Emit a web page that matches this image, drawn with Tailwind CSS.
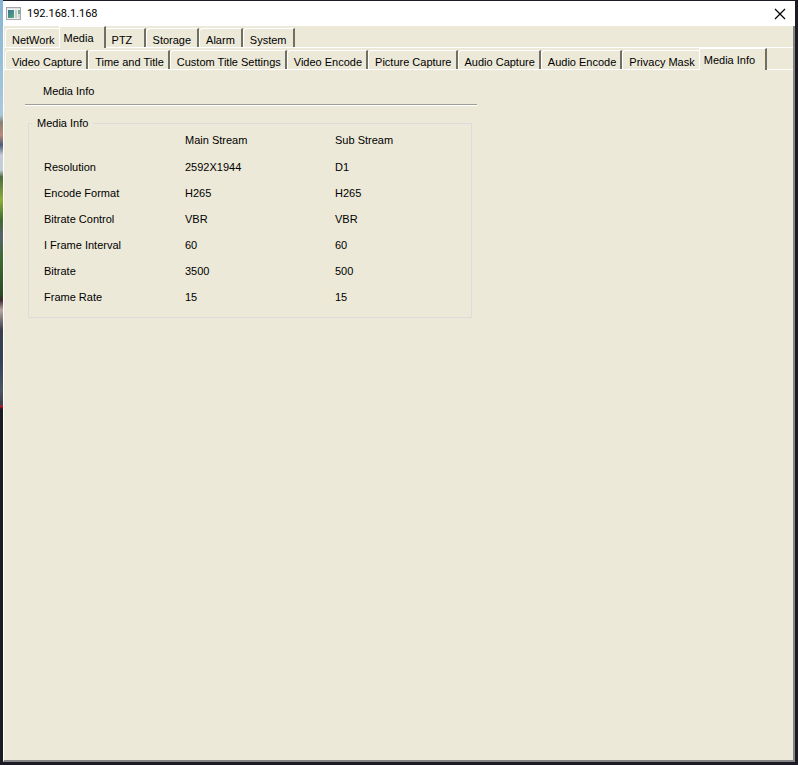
<!DOCTYPE html>
<html lang="en">
<head>
  <meta charset="UTF-8" />
  <meta name="viewport" content="width=device-width, initial-scale=1.0" />
  <title>192.168.1.168</title>
  <script src="https://cdn.jsdelivr.net/npm/@tailwindcss/browser@4"></script>
</head>
<body class="relative min-h-screen flex flex-col bg-[#1c1a22] pt-px pr-[3px] pb-[3px] pl-[3px] font-['Liberation_Sans',Arial,sans-serif] text-[11px] leading-4 text-black">
  <!-- Desktop showing beside the window -->
  <div class="absolute left-0 top-0 w-[3px] h-[409px] bg-[linear-gradient(180deg,#86b4d4_0px,#a9c9dc_115px,#8a8175_122px,#b98a78_135px,#4f5b78_145px,#c5ccd4_155px,#c3cfd4_170px,#4c6b3c_177px,#8fae3d_200px,#3f6a2c_220px,#56636c_236px,#3f6a2c_260px,#2c4a24_295px,#402830_300px,#b9a9a0_310px,#3a3f48_330px,#33415a_360px,#4c5661_390px,#3a414a_405px,#e01020_406px,#1c1a22_409px)]"></div>

  <div class="flex-1 flex flex-col bg-[#ece9d8]">
    <!-- Title bar -->
    <header class="flex items-center justify-between h-[25px] bg-white pl-[3px] pr-2">
      <div class="flex items-center gap-[6px]">
        <svg class="w-[15px] h-[13px]" viewBox="0 0 15 13" shape-rendering="crispEdges">
          <defs>
            <linearGradient id="pane" x1="0" y1="0" x2="1" y2="1">
              <stop offset="0" stop-color="#3f6f9c" />
              <stop offset="1" stop-color="#4fae72" />
            </linearGradient>
          </defs>
          <rect x="0.5" y="0.5" width="14" height="12" fill="#f1f1f1" stroke="#a3a7ab" />
          <rect x="1" y="1" width="13" height="1" fill="#dfe3e6" />
          <rect x="2" y="3" width="6" height="8" fill="url(#pane)" />
          <rect x="9" y="3" width="2" height="8" fill="#c9ced2" />
          <rect x="12" y="3" width="2" height="4" fill="#6faf94" />
          <rect x="12" y="7" width="2" height="4" fill="#d5d9dc" />
        </svg>
        <h1 class="font-[Roboto,'Segoe_UI',sans-serif] text-[11px]">192.168.1.168</h1>
      </div>
      <button type="button" aria-label="Close" class="flex">
        <svg class="w-[14px] h-[12px]" viewBox="0 0 14 12" fill="none" stroke="#000" stroke-width="1.2">
          <path d="M2 1l10 10M12 1L2 11" />
        </svg>
      </button>
    </header>

    <div class="flex-1 flex flex-col border-l border-l-white border-r-2 border-r-[#858585] border-b-2 border-b-[#858585]">
      <!-- Main tabs -->
      <nav class="flex items-end h-[22px] pl-px border-b border-white">
        <a href="#network" class="h-[19px] pl-[6px] pr-1 pt-[3px] border-t border-l rounded-tl-sm border-white whitespace-nowrap">NetWork</a>
        <a href="#media" aria-current="page" class="h-[22px] -mb-px pl-1 pr-[10px] pt-[3px] border-t border-l border-r-2 border-white border-r-[#716f64] bg-[#ece9d8] whitespace-nowrap">Media</a>
        <a href="#ptz" class="h-[19px] min-w-10 px-[6px] pt-[3px] border-t border-r-2 border-white border-r-[#716f64] whitespace-nowrap">PTZ</a>
        <a href="#storage" class="h-[19px] px-[6px] pt-[3px] border-t border-l border-r-2 rounded-tl-sm border-white border-r-[#716f64] whitespace-nowrap">Storage</a>
        <a href="#alarm" class="h-[19px] px-[6px] pt-[3px] border-t border-l border-r-2 rounded-tl-sm border-white border-r-[#716f64] whitespace-nowrap">Alarm</a>
        <a href="#system" class="h-[19px] px-[6px] pt-[3px] border-t border-l border-r-2 rounded-tl-sm border-white border-r-[#716f64] whitespace-nowrap">System</a>
      </nav>

      <!-- Media tabs -->
      <nav class="flex items-end h-[22px] pl-px border-b border-white">
        <a href="#video-capture" class="h-[19px] pl-[6px] pr-1 pt-[3px] border-t border-l border-r-2 rounded-tl-sm border-white border-r-[#716f64] whitespace-nowrap">Video Capture</a>
        <a href="#time-title" class="h-[19px] pl-[6px] pr-1 pt-[3px] border-t border-l border-r-2 rounded-tl-sm border-white border-r-[#716f64] whitespace-nowrap">Time and Title</a>
        <a href="#custom-title" class="h-[19px] pl-[6px] pr-1 pt-[3px] border-t border-l border-r-2 rounded-tl-sm border-white border-r-[#716f64] whitespace-nowrap">Custom Title Settings</a>
        <a href="#video-encode" class="h-[19px] pl-[6px] pr-1 pt-[3px] border-t border-l border-r-2 rounded-tl-sm border-white border-r-[#716f64] whitespace-nowrap">Video Encode</a>
        <a href="#picture-capture" class="h-[19px] pl-[6px] pr-1 pt-[3px] border-t border-l border-r-2 rounded-tl-sm border-white border-r-[#716f64] whitespace-nowrap">Picture Capture</a>
        <a href="#audio-capture" class="h-[19px] pl-[6px] pr-1 pt-[3px] border-t border-l border-r-2 rounded-tl-sm border-white border-r-[#716f64] whitespace-nowrap">Audio Capture</a>
        <a href="#audio-encode" class="h-[19px] pl-[6px] pr-1 pt-[3px] border-t border-l border-r-2 rounded-tl-sm border-white border-r-[#716f64] whitespace-nowrap">Audio Encode</a>
        <a href="#privacy-mask" class="h-[19px] pl-[6px] pr-1 pt-[3px] border-t border-l rounded-tl-sm border-white whitespace-nowrap">Privacy Mask</a>
        <a href="#media-info" aria-current="page" class="h-[22px] -mb-px pl-1 pr-[10px] pt-[3px] border-t border-l border-r-2 border-white border-r-[#716f64] bg-[#ece9d8] whitespace-nowrap">Media Info</a>
      </nav>

      <!-- Media info page -->
      <main class="flex-1 pt-[13px] pl-[21px]">
        <div class="max-w-[452px]">
          <h2 class="pl-[18px] pb-[5px]">Media Info</h2>
          <div class="h-[2px] bg-white border-t border-[#a09e96]"></div>
        </div>

        <fieldset class="max-w-[444px] mt-[9px] ml-[3px] px-[3px] pt-px pb-[2px] border border-[#dcdcdc]">
          <legend class="px-[5px]">Media Info</legend>
          <table class="w-full table-fixed text-left">
            <colgroup>
              <col class="w-[141px]" />
              <col class="w-[150px]" />
              <col />
            </colgroup>
            <thead>
              <tr class="h-[27px] align-top">
                <td></td>
                <th scope="col" class="pl-3 font-normal">Main Stream</th>
                <th scope="col" class="pl-3 font-normal">Sub Stream</th>
              </tr>
            </thead>
            <tbody>
              <tr class="h-[26px] align-top">
                <th scope="row" class="pl-3 font-normal">Resolution</th>
                <td class="pl-3">2592X1944</td>
                <td class="pl-3">D1</td>
              </tr>
              <tr class="h-[26px] align-top">
                <th scope="row" class="pl-3 font-normal">Encode Format</th>
                <td class="pl-3">H265</td>
                <td class="pl-3">H265</td>
              </tr>
              <tr class="h-[26px] align-top">
                <th scope="row" class="pl-3 font-normal">Bitrate Control</th>
                <td class="pl-3">VBR</td>
                <td class="pl-3">VBR</td>
              </tr>
              <tr class="h-[26px] align-top">
                <th scope="row" class="pl-3 font-normal">I Frame Interval</th>
                <td class="pl-3">60</td>
                <td class="pl-3">60</td>
              </tr>
              <tr class="h-[26px] align-top">
                <th scope="row" class="pl-3 font-normal">Bitrate</th>
                <td class="pl-3">3500</td>
                <td class="pl-3">500</td>
              </tr>
              <tr class="h-[26px] align-top">
                <th scope="row" class="pl-3 font-normal">Frame Rate</th>
                <td class="pl-3">15</td>
                <td class="pl-3">15</td>
              </tr>
            </tbody>
          </table>
        </fieldset>
      </main>
    </div>
  </div>
</body>
</html>
